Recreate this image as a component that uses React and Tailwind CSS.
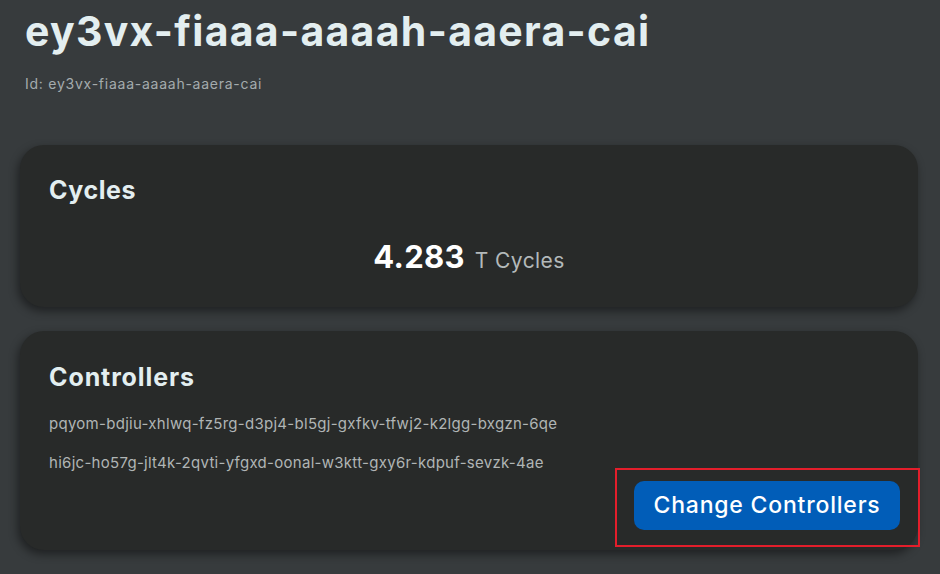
export default function App() {
  const controllers = [
    'pqyom-bdjiu-xhlwq-fz5rg-d3pj4-bl5gj-gxfkv-tfwj2-k2lgg-bxgzn-6qe',
    'hi6jc-ho57g-jlt4k-2qvti-yfgxd-oonal-w3ktt-gxy6r-kdpuf-sevzk-4ae',
  ]

  return (
    <div className="min-h-screen w-full bg-[#373b3d] px-5 pt-[7px] font-['Inter','Lato',sans-serif] overflow-hidden">
      <h1 className="pl-[5px] text-[41px] leading-[48px] font-bold text-[#e3eef0] tracking-[1.3px]">
        ey3vx-fiaaa-aaaah-aaera-cai
      </h1>
      <p className="pl-[5px] mt-[20px] text-[14px] leading-[18px] text-[#a4abad] tracking-[0.75px]">
        Id: ey3vx-fiaaa-aaaah-aaera-cai
      </p>

      <section className="mt-[52px] w-[898px] h-[162px] rounded-[24px] bg-[#282a29] shadow-[-2px_4px_10px_rgba(0,0,0,0.45)] px-[29px] pt-[29px]">
        <h2 className="text-[25px] leading-[32px] font-bold text-[#e3eef0] tracking-[0.6px]">Cycles</h2>
        <div className="mt-[34px] flex items-baseline justify-center gap-[10px]">
          <span className="text-[31px] leading-[34px] font-bold text-white tracking-[0.3px]">4.283</span>
          <span className="text-[21px] leading-[26px] text-[#b3b9ba] tracking-[0.4px]">T Cycles</span>
        </div>
      </section>

      <section className="mt-[24px] w-[898px] h-[219px] rounded-[24px] bg-[#282a29] shadow-[-2px_4px_10px_rgba(0,0,0,0.45)] pl-[29px] pr-[18px] pt-[30px] flex flex-col">
        <h2 className="text-[25px] leading-[32px] font-bold text-[#e3eef0] tracking-[0.9px]">Controllers</h2>
        <div className="mt-[22px] flex flex-col gap-[21px]">
          {controllers.map(c => (
            <p key={c} className="text-[15px] leading-[18px] text-[#b0b5b5] tracking-[0.28px]">{c}</p>
          ))}
        </div>
        <div className="mt-[9px] flex justify-end">
          <div className="relative">
            <button className="w-[266px] h-[49px] rounded-[10px] bg-[#015db8] text-[23px] font-medium text-white tracking-[0.8px]">
              Change Controllers
            </button>
            <div className="absolute -left-[19px] -top-[13px] -right-[20px] -bottom-[17px] border-2 border-[#e41e2b] pointer-events-none" />
          </div>
        </div>
      </section>
    </div>
  )
}
